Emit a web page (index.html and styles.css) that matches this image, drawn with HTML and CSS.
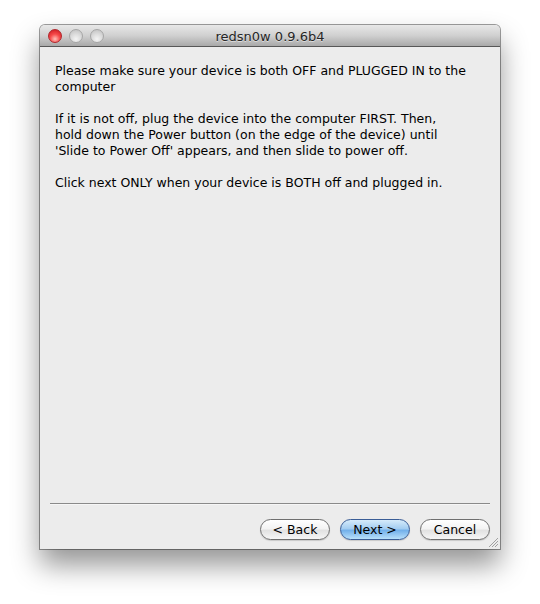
FILE: index.html
```html
<!DOCTYPE html>
<html>
<head>
<meta charset="utf-8">
<link rel="stylesheet" href="styles.css">
</head>
<body>
<div class="window">
  <div class="titlebar">
    <div class="lights">
      <span class="light red"></span>
      <span class="light"></span>
      <span class="light"></span>
    </div>
    <div class="title">redsn0w 0.9.6b4</div>
  </div>
  <div class="content">
    <div class="text">
      <p>Please make sure your device is both OFF and PLUGGED IN to the<br>computer</p>
      <p>If it is not off, plug the device into the computer FIRST. Then,<br>hold down the Power button (on the edge of the device) until<br>'Slide to Power Off' appears, and then slide to power off.</p>
      <p>Click next ONLY when your device is BOTH off and plugged in.</p>
    </div>
    <div class="footer">
      <div class="separator"></div>
      <div class="buttons">
        <button class="btn">&lt; Back</button>
        <button class="btn primary">Next &gt;</button>
        <button class="btn">Cancel</button>
      </div>
    </div>
    <svg class="grip" width="11" height="11" viewBox="0 0 11 11">
      <line x1="1" y1="10" x2="10" y2="1" stroke="#a0a0a0" stroke-width="1"/>
      <line x1="4" y1="10" x2="10" y2="4" stroke="#a0a0a0" stroke-width="1"/>
      <line x1="7" y1="10" x2="10" y2="7" stroke="#a0a0a0" stroke-width="1"/>
    </svg>
  </div>
</div>
</body>
</html>
```
FILE: styles.css
```css
html, body {
  margin: 0;
  padding: 0;
  background: #ffffff;
}
body {
  font-family: "DejaVu Sans", "Liberation Sans", sans-serif;
  font-size: 12.5px;
  color: #000;
  padding: 25px 0 0 40px;
  min-height: 604px;
  box-sizing: border-box;
}
.window {
  width: 460px;
  height: 524px;
  box-sizing: border-box;
  display: flex;
  flex-direction: column;
  border-radius: 5px 5px 0 0;
  box-shadow: 0 16px 28px rgba(0,0,0,0.42), 0 0 0 1px rgba(0,0,0,0.38);
  background: #ececec;
  overflow: hidden;
}
.titlebar {
  height: 21px;
  flex: none;
  position: relative;
  background: linear-gradient(#e8e8e8, #d0d0d0 50%, #a9a9a9);
  border-bottom: 1px solid #575757;
  display: flex;
  align-items: center;
  justify-content: center;
}
.lights {
  position: absolute;
  left: 8px;
  top: 4px;
  display: flex;
  gap: 7px;
}
.light {
  width: 14px;
  height: 14px;
  border-radius: 50%;
  box-sizing: border-box;
  border: 1px solid #a6a6a6;
  background: radial-gradient(circle at 50% 75%, #f4f4f4 0%, #dadada 50%, #bdbdbd 100%);
}
.light.red {
  border-color: #b0262c;
  background: radial-gradient(circle at 50% 75%, #ffc0b8 0%, #f64a4a 45%, #c8141c 100%);
}
.title {
  font-size: 13px;
  color: #262626;
  text-shadow: 0 1px 0 rgba(255,255,255,0.5);
  padding-top: 1px;
}
.content {
  flex: 1;
  display: flex;
  flex-direction: column;
  position: relative;
}
.text {
  flex: 1;
  padding: 16px 15px 0 15px;
}
.text p {
  margin: 0 0 16px 0;
  line-height: 16px;
}
.footer {
  padding: 0 10px 9px 10px;
}
.separator {
  height: 1px;
  background: #8a8a8a;
  border-bottom: 1px solid #f6f6f6;
}
.buttons {
  display: flex;
  justify-content: flex-end;
  gap: 10px;
  margin-top: 14px;
}
.btn {
  width: 70px;
  height: 21px;
  box-sizing: border-box;
  border-radius: 11px;
  border: 1px solid #6f6f6f;
  background: linear-gradient(#ffffff, #f3f3f3 45%, #e2e2e2 55%, #f6f6f6);
  font-family: "DejaVu Sans", "Liberation Sans", sans-serif;
  font-size: 12.5px;
  color: #000;
  padding: 0;
  box-shadow: 0 1px 1px rgba(0,0,0,0.15);
}
.btn.primary {
  border-color: #3a5d96;
  background: linear-gradient(#d6ebfb, #a4cdf1 45%, #73b0ea 55%, #b8e0fb);
}
.grip {
  position: absolute;
  right: 1px;
  bottom: 1px;
}
```
